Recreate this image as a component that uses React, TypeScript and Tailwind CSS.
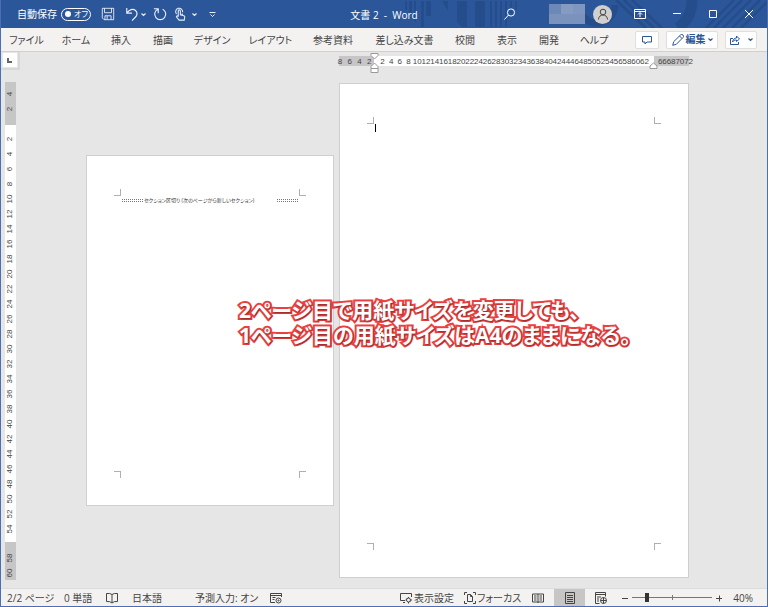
import type { ReactNode } from "react";

interface Tab {
  label: string;
  width: string;
}

const tabs: Tab[] = [
  { label: "ファイル", width: "w-[51px]" },
  { label: "ホーム", width: "w-[48px]" },
  { label: "挿入", width: "w-[42px]" },
  { label: "描画", width: "w-[42px]" },
  { label: "デザイン", width: "w-[56px]" },
  { label: "レイアウト", width: "w-[61px]" },
  { label: "参考資料", width: "w-[64px]" },
  { label: "差し込み文書", width: "w-[79px]" },
  { label: "校閲", width: "w-[42px]" },
  { label: "表示", width: "w-[42px]" },
  { label: "開発", width: "w-[42px]" },
  { label: "ヘルプ", width: "w-[48px]" },
];

// even numbers from..to, counting down when from > to
const evens = (from: number, to: number) => {
  const count = Math.abs(to - from) / 2 + 1;
  const step = from > to ? -2 : 2;
  return Array.from({ length: count }, (_, i) => from + i * step);
};

const Icon = ({
  size = "size-4",
  box = "0 0 16 16",
  children,
}: {
  size?: string;
  box?: string;
  children: ReactNode;
}) => (
  <svg
    viewBox={box}
    className={`${size} shrink-0`}
    fill="none"
    stroke="currentColor"
    aria-hidden="true"
  >
    {children}
  </svg>
);

const Chevron = () => (
  <Icon size="size-[5px]" box="0 0 5 5">
    <path d="M.5 1.5l2 2 2-2" strokeWidth="1.2" />
  </Icon>
);

const TitleArt = () => (
  <svg
    className="absolute right-0 top-0 h-full w-[368px]"
    viewBox="400 0 368 28"
    preserveAspectRatio="xMaxYMid slice"
    aria-hidden="true"
  >
    <g fill="#244a86" opacity=".7">
      <path d="M406 1h2v9h-2zM410 1h3v14h-3zM415 1h2v20h-2zM422 1h3v26h-3zM427 1h5v15h-5z" />
      <path d="M443 1h6v10zM458 1h10v26h-5l-5-5zM476 1h10v26h-10zM491 1h2v26h-2zM496 1h2v26h-2zM501 1h2v26h-2zM506 1h2v26h-2zM511 1h2v12h-2zM516 1h2v9h-2z" />
    </g>
    <g stroke="#244a86" opacity=".7" fill="none">
      <path d="M580 5a18 18 0 0 0 36 0" strokeWidth="7" />
      <path d="M617 0l30 28M625 0l30 28M633 0l30 28" strokeWidth="3" />
      <path d="M693 0q0 18-14 28" strokeWidth="11" />
      <path d="M735 0l-28 28M743 0l-28 28M752 0l-28 28M761 0l-28 28M770 0l-28 28" strokeWidth="2.5" />
    </g>
  </svg>
);

const TitleBar = () => (
  <header className="relative flex h-7 items-center overflow-hidden bg-[#2b579a] text-[10px] text-white">
    <TitleArt />
    <label className="relative ml-4 flex items-center gap-1 whitespace-nowrap">
      自動保存
      <input type="checkbox" role="switch" className="peer sr-only" />
      <span className="flex h-[13px] w-[30px] items-center gap-[3px] rounded-full border border-white px-[3px] text-[8px] leading-none">
        <span className="size-[6px] shrink-0 rounded-full bg-white" />
        オフ
      </span>
    </label>
    <div className="relative ml-[10px] flex items-center text-white/90">
      <button type="button" aria-label="上書き保存">
        <Icon size="size-[14px]">
          <path d="M1.5 1.5h13v13h-11l-2-2zM4 1.5v5h8v-5M4.500 14.500v-4.500h7v4.500M7 10v4" />
        </Icon>
      </button>
      <button type="button" aria-label="元に戻す" className="ml-[10px] flex items-center gap-[2px]">
        <Icon size="size-[14px]">
          <path d="M2 1v6h6M2.300 6.700C5 3 9 1.500 12 4c3 3 1.500 6-.5 8L8 15.500" strokeWidth="1.3" />
        </Icon>
        <Chevron />
      </button>
      <button type="button" aria-label="繰り返し" className="ml-[7px]">
        <Icon size="size-[14px]">
          <path d="M1 2h5v5M5.500 2.500A6.300 6.300 0 1 0 11 2.500" strokeWidth="1.3" />
        </Icon>
      </button>
      <button type="button" aria-label="タッチ/マウス モードの切り替え" className="ml-[6px] flex items-center gap-[5px]">
        <Icon size="size-[14px]">
          <path d="M4 8a4 4 0 1 1 7-2M6 11V4.500a1.200 1.200 0 0 1 2.400 0V9l4 1c1 .3 1.200 1 1 2l-.6 3H7L4 11.500c-.6-1 .6-1.700 1.200-1L6 11M8.400 7v2M10.500 7.500v2" strokeWidth="1.2" />
        </Icon>
        <Chevron />
      </button>
      <button type="button" aria-label="クイック アクセス ツール バーのカスタマイズ" className="ml-3">
        <Icon size="size-[7px]" box="0 0 7 7">
          <path d="M.5 1.500h6M1.500 3.500l2 2 2-2" />
        </Icon>
      </button>
    </div>
    <h1 className="absolute left-1/2 -translate-x-1/2 whitespace-pre pt-[2px] font-normal">
      文書 2  -  Word
    </h1>
    <div className="relative ml-auto flex items-center">
      <button type="button" aria-label="検索">
        <Icon size="size-3" box="0 0 12 12">
          <circle cx="7" cy="4.500" r="3.600" />
          <path d="M4.500 7L.5 11.500" />
        </Icon>
      </button>
      <span className="ml-[33px] flex h-5 w-9 flex-wrap bg-[#7b93bc]">
        <span className="h-[10px] w-3 bg-[#6c88b6]" />
        <span className="h-[10px] w-3 bg-[#859bc2]" />
        <span className="h-[10px] w-3 bg-[#7f97c0]" />
      </span>
      <button
        type="button"
        aria-label="アカウント"
        className="ml-2 flex size-[19px] items-center justify-center rounded-full bg-[#d2d0ce] text-[#444]"
      >
        <Icon size="size-3" box="0 0 12 12">
          <circle cx="6" cy="4" r="2.800" />
          <path d="M1.500 11.500c0-6 9-6 9 0" />
        </Icon>
      </button>
      <button type="button" aria-label="リボンの表示オプション" className="ml-[22px]">
        <Icon size="size-3" box="0 0 12 12">
          <path d="M.5 1.500h11v9H.5zM.5 3.500h11M6 9V5M4 6.500l2-2 2 2" />
        </Icon>
      </button>
      <button type="button" aria-label="最小化" className="ml-[26px]">
        <Icon size="size-[10px]" box="0 0 10 10">
          <path d="M1 4.500h8" />
        </Icon>
      </button>
      <button type="button" aria-label="元のサイズに戻す" className="ml-[26px]">
        <Icon size="size-[10px]" box="0 0 10 10">
          <path d="M1.500 1.500h7v7h-7z" />
        </Icon>
      </button>
      <button type="button" aria-label="閉じる" className="ml-[26px] mr-[13px]">
        <Icon size="size-[10px]" box="0 0 10 10">
          <path d="M1 1l8 8M9 1l-8 8" />
        </Icon>
      </button>
    </div>
  </header>
);

const Ribbon = () => (
  <nav className="flex h-6 items-center border-b border-[#d2d0ce] bg-[#f3f2f1] pr-[10px] text-[10px] text-[#444]">
    {tabs.map((tab) => (
      <button
        key={tab.label}
        type="button"
        className={`flex justify-center whitespace-nowrap pt-[2px] ${tab.width}`}
      >
        {tab.label}
      </button>
    ))}
    <div className="ml-auto flex items-center gap-[7px] text-[#2b579a]">
      <button
        type="button"
        aria-label="コメント"
        className="flex h-[18px] w-6 items-center justify-center rounded-xs border border-[#e1dfdd] bg-white"
      >
        <Icon size="size-[10px]" box="0 0 10 10">
          <path d="M.5 1.500h9v5.500H5L3 9V7H.5z" />
        </Icon>
      </button>
      <button
        type="button"
        className="flex h-[18px] w-[52px] items-center justify-center gap-[2px] rounded-xs border border-[#e1dfdd] bg-white font-bold"
      >
        <Icon size="size-3" box="0 0 12 12">
          <path d="M.7 11.300l1-3.600L8.500 1a1.500 1.500 0 0 1 2.500 2.500L4.300 10.300zM7.500 2l2.500 2.500" />
        </Icon>
        編集
        <Chevron />
      </button>
      <button
        type="button"
        aria-label="共有"
        className="flex h-[18px] w-8 items-center justify-center gap-2 rounded-xs border border-[#e1dfdd] bg-white"
      >
        <Icon size="size-[10px]" box="0 0 10 10">
          <path d="M3 3.500H.5v6h8V7M2.500 7C3 4.500 4.500 3 6.500 3V1l3 3-3 2.500V5c-2 0-3 .5-4 2z" />
        </Icon>
        <Chevron />
      </button>
    </div>
  </nav>
);

const HCells = ({ values }: { values: number[] }) => (
  <div className="flex w-full">
    {values.map((value) => (
      <span key={value} className="flex w-0 grow justify-center">
        {value}
      </span>
    ))}
  </div>
);

const HorizontalRuler = () => (
  <div className="relative flex h-[10px] w-[350px] font-['Liberation_Sans',sans-serif] text-[8px] leading-[11px] text-[#444]">
    <div className="w-[35px] bg-[#c6c6c6]">
      <div className="-ml-1">
        <HCells values={evens(8, 2)} />
      </div>
    </div>
    <div className="grow bg-white pl-1 pr-[5px]">
      <HCells values={evens(2, 62)} />
    </div>
    <div className="w-[35px] bg-[#c6c6c6]">
      <div className="-mr-1 ml-1">
        <HCells values={evens(66, 72)} />
      </div>
    </div>
    <svg
      viewBox="0 0 9 20"
      className="absolute -top-[3px] left-[31px] h-5 w-[9px]"
      fill="#fff"
      stroke="#999"
      aria-hidden="true"
    >
      <path d="M1 .5h7v2L4.500 6 1 2.500zM4.500 10L8 13.500v2H1v-2zM1 15.500h7v4H1z" />
    </svg>
    <svg
      viewBox="0 0 9 7"
      className="absolute right-[31px] top-[6px] h-[7px] w-[9px]"
      fill="#fff"
      stroke="#999"
      aria-hidden="true"
    >
      <path d="M4.500 1L8 4v2.500H1V4z" />
    </svg>
  </div>
);

const VCells = ({ values }: { values: number[] }) => (
  <>
    {values.map((value) => (
      <span key={value} className="flex h-[15px] items-center justify-center">
        <span className="-rotate-90">{value}</span>
      </span>
    ))}
  </>
);

const VerticalRuler = () => (
  <div className="mt-3 w-[11px] font-['Liberation_Sans',sans-serif] text-[8px] leading-none text-[#444]">
    <div className="h-[43px] bg-[#c6c6c6] pt-1">
      <VCells values={evens(4, 2)} />
    </div>
    <div className="bg-white pb-[6px] pt-[6px]">
      <VCells values={evens(2, 54)} />
    </div>
    <div className="h-[38px] bg-[#c6c6c6] pt-2">
      <VCells values={evens(58, 60)} />
    </div>
  </div>
);

// printable-area corners, two across the top and two across the bottom
const CropMarks = () => (
  <>
    <div className="flex justify-between">
      <span className="size-[7px] border-b border-r border-[#b0b0b0]" />
      <span className="size-[7px] border-b border-l border-[#b0b0b0]" />
    </div>
    <div className="flex justify-between">
      <span className="size-[7px] border-r border-t border-[#b0b0b0]" />
      <span className="size-[7px] border-l border-t border-[#b0b0b0]" />
    </div>
  </>
);

const Workspace = () => (
  <main className="relative flex grow bg-[#e6e6e6]">
    <div className="w-[19px] shrink-0">
      <div className="flex h-[18px] items-center justify-center border-b-2 border-r-2 border-[#d8d8d8]">
        <button
          type="button"
          aria-label="左揃えタブ"
          className="flex size-[14px] items-center justify-center bg-white"
        >
          <span className="size-[5px] border-b-2 border-l-2 border-[#666]" />
        </button>
      </div>
      <div className="ml-1">
        <VerticalRuler />
      </div>
    </div>
    <div className="min-w-0 grow pr-3">
      <div className="flex justify-center gap-[5px] pt-1">
        <div className="w-[248px] shrink-0" />
        <HorizontalRuler />
      </div>
      <div className="flex items-center justify-center gap-[5px] pb-[10px] pt-[17px]">
        <section className="relative flex h-[351px] w-[248px] shrink-0 flex-col justify-between border border-[#cfcfcf] bg-white px-[27px] pb-[27px] pt-[33px]">
          <CropMarks />
          <p className="absolute inset-x-[35px] top-10 flex items-center whitespace-nowrap text-[5px] leading-[8px] text-[#333]">
            <span className="w-[21px] border-y border-dotted border-[#777] pt-px" />
            <span className="grow pl-px">
              セクション区切り (次のページから新しいセクション)
            </span>
            <span className="w-[21px] border-y border-dotted border-[#777] pt-px" />
          </p>
        </section>
        <section className="relative flex h-[495px] w-[350px] shrink-0 flex-col justify-between border border-[#cfcfcf] bg-white px-[27px] pb-[27px] pt-[33px]">
          <CropMarks />
          <span className="absolute left-[35px] top-10 h-2 w-px bg-black" />
        </section>
      </div>
    </div>
    <p className="absolute left-[238px] top-[246px] whitespace-nowrap text-[21px] font-bold leading-[25px] text-white [-webkit-text-stroke:4px_#ee4040] [paint-order:stroke_fill] [text-shadow:1px_1px_2px_#0006]">
      <span className="block">2ページ目で用紙サイズを変更しても、</span>
      <span className="block">1ページ目の用紙サイズはA4のままになる。</span>
    </p>
  </main>
);

const StatusBar = () => (
  <footer className="flex h-[18px] items-center whitespace-nowrap border-t border-[#dcdcdc] bg-[#f3f2f1] pl-[6px] pr-[14px] text-[10px] leading-none text-[#444]">
    <span className="w-[57px]">2/2 ページ</span>
    <span className="w-[42px]">0 単語</span>
    <button type="button" aria-label="文章校正" className="mr-[14px]">
      <Icon size="size-3" box="0 0 12 12">
        <path d="M6 2.500Q4 1 .5 1.500v8q3.500-.5 5.500 1.500 2-2 5.500-1.500v-8Q8 1 6 2.500V11" />
      </Icon>
    </button>
    <span className="w-[63px]">日本語</span>
    <span className="w-[75px]">予測入力: オン</span>
    <button type="button" aria-label="マクロの記録">
      <Icon size="size-3" box="0 0 12 12">
        <path d="M5 10.500H.5v-9h11V5M.5 3.500h11M2.500 5.500h3M2.500 7.500h2" />
        <circle cx="8.500" cy="8.500" r="2.500" />
        <circle cx="8.500" cy="8.500" r=".6" />
      </Icon>
    </button>
    <div className="ml-auto flex h-full items-center">
      <button type="button" className="flex items-center gap-[2px]">
        <Icon size="size-3" box="0 0 12 12">
          <path d="M5 8.500H.5v-7h11V5M3 10.500h2" />
          <circle cx="8.500" cy="8" r="2" />
          <path d="M8.500 5v1M8.500 10v1.500M5.500 8h1M10.500 8h1.500M6.500 6l.8.800M9.800 9.200l.8.800" />
        </Icon>
        表示設定
      </button>
      <button type="button" className="ml-[10px] flex items-center gap-px">
        <Icon size="size-3" box="0 0 12 12">
          <path d="M3 .5H.5V3M9 .5h2.500V3M.5 9v2.500H3M11.500 9v2.500H9M3.500 2.500h3l2 2v5h-5zM6.500 2.500v2h2" />
        </Icon>
        フォーカス
      </button>
      <button type="button" aria-label="閲覧モード" className="ml-[11px]">
        <Icon size="size-3" box="0 0 12 12">
          <path d="M6 2H.5v8H6h5.500V2H6v9M2 4h2.500M2 6h2.500M2 8h2.500M7.500 4H10M7.500 6H10M7.500 8H10" />
        </Icon>
      </button>
      <button
        type="button"
        aria-label="印刷レイアウト"
        className="ml-[10px] flex h-full w-[31px] items-center justify-center bg-[#c8c6c4]"
      >
        <Icon size="size-3" box="0 0 12 12">
          <path d="M1.500.5h9v11h-9zM3 3.500h6M3 5.500h6M3 7.500h6M3 9.500h6" />
        </Icon>
      </button>
      <button type="button" aria-label="Web レイアウト" className="ml-[10px]">
        <Icon size="size-3" box="0 0 12 12">
          <path d="M4.500 11.500h-4v-11h10v4M.5 2.500h10M2 5h4M2 7h2M2 9h2" />
          <circle cx="8.500" cy="8.500" r="3" />
          <path d="M5.500 8.500h6M8.500 5.500v6" />
        </Icon>
      </button>
      <button type="button" aria-label="縮小" className="ml-[14px]">
        <Icon size="size-2" box="0 0 8 8">
          <path d="M1 4.500h6" />
        </Icon>
      </button>
      <input
        type="range"
        aria-label="ズーム"
        min={10}
        max={500}
        defaultValue={95}
        className="ml-[3px] h-3 w-20 appearance-none bg-[linear-gradient(#777,#777),linear-gradient(#777,#777)] bg-[length:100%_1px,1px_5px] bg-center bg-no-repeat [&::-webkit-slider-thumb]:h-[9px] [&::-webkit-slider-thumb]:w-1 [&::-webkit-slider-thumb]:appearance-none [&::-webkit-slider-thumb]:bg-[#333]"
      />
      <button type="button" aria-label="拡大" className="ml-[3px]">
        <Icon size="size-2" box="0 0 8 8">
          <path d="M1 4.500h6M4.500 1.500v6" />
        </Icon>
      </button>
      <span className="ml-[10px]">40%</span>
    </div>
  </footer>
);

const App = () => (
  <div className="flex min-h-screen w-full flex-col overflow-hidden border-x border-b border-[#4a6fb5] font-['Open_Sans','Noto_Sans_CJK_JP',sans-serif] [font-feature-settings:'palt']">
    <TitleBar />
    <Ribbon />
    <Workspace />
    <StatusBar />
  </div>
);

export default App;
